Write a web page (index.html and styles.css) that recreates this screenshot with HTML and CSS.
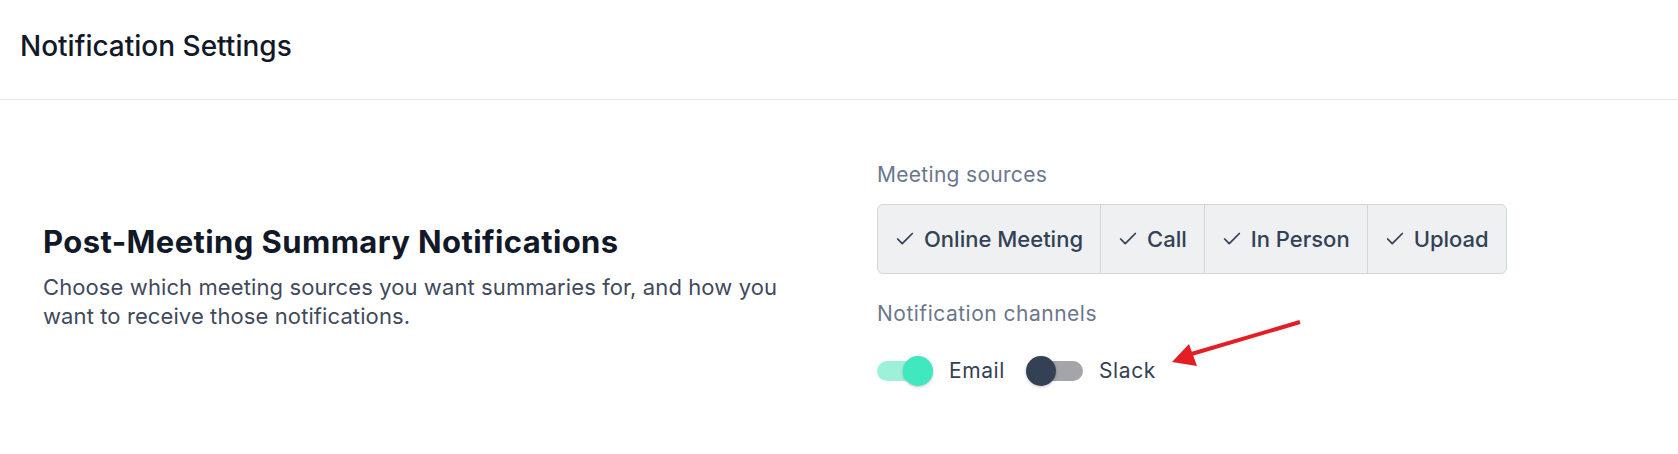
FILE: index.html
```html
<!DOCTYPE html>
<html lang="en">
<head>
<meta charset="utf-8">
<title>Notification Settings</title>
<link rel="stylesheet" href="styles.css">
</head>
<body>
<header class="topbar">
  <h1 class="page-title">Notification Settings</h1>
</header>
<main class="settings">
  <section class="setting-row">
    <div class="setting-info">
      <h2 class="setting-title">Post-Meeting Summary Notifications</h2>
      <p class="setting-desc">Choose which meeting sources you want summaries for, and how you want to receive those notifications.</p>
    </div>
    <div class="setting-controls">
      <div class="field-label">Meeting sources</div>
      <div class="segmented">
        <button class="segment"><svg class="check" viewBox="0 0 24 24"><path d="M20 6 9 17l-5-5"/></svg>Online Meeting</button>
        <button class="segment"><svg class="check" viewBox="0 0 24 24"><path d="M20 6 9 17l-5-5"/></svg>Call</button>
        <button class="segment"><svg class="check" viewBox="0 0 24 24"><path d="M20 6 9 17l-5-5"/></svg>In Person</button>
        <button class="segment"><svg class="check" viewBox="0 0 24 24"><path d="M20 6 9 17l-5-5"/></svg>Upload</button>
      </div>
      <div class="field-label field-label-channels">Notification channels</div>
      <div class="channels">
        <label class="channel">
          <span class="toggle toggle-on"><span class="track"></span><span class="knob"></span></span>
          <span class="channel-name">Email</span>
        </label>
        <label class="channel">
          <span class="toggle toggle-off"><span class="track"></span><span class="knob"></span></span>
          <span class="channel-name">Slack</span>
        </label>
      </div>
    </div>
  </section>
</main>
<svg class="annotation-arrow" viewBox="0 0 1678 454" aria-hidden="true">
  <line x1="1300" y1="322" x2="1188" y2="355" stroke="#e31e24" stroke-width="4" stroke-linecap="butt"/>
  <polygon points="1172,362 1189,344 1197,366" fill="#e31e24"/>
</svg>
</body>
</html>
```
FILE: styles.css
```css
* { box-sizing: border-box; }

html, body {
  margin: 0;
  padding: 0;
  background: #ffffff;
}

body {
  font-family: Inter, "Open Sans", "Noto Sans", sans-serif;
  color: #111827;
  width: 1678px;
  height: 454px;
  overflow: hidden;
  position: relative;
}

.topbar {
  height: 100px;
  border-bottom: 1px solid #e5e7eb;
  display: flex;
  align-items: center;
  padding: 0 20px 8px;
}

.page-title {
  margin: 0;
  font-size: 28px;
  font-weight: 500;
  line-height: 34px;
  color: #111827;
}

.setting-row {
  display: grid;
  grid-template-columns: 758px 1fr;
  column-gap: 76px;
  padding: 62px 43px 0;
  align-items: center;
}

.setting-info {
  padding-top: 5px;
}

.setting-title {
  margin: 0 0 12px;
  font-size: 31px;
  line-height: 38px;
  font-weight: 700;
  letter-spacing: 0.4px;
  color: #111827;
}

.setting-desc {
  margin: 0;
  font-size: 22px;
  line-height: 29px;
  letter-spacing: 0.1px;
  color: #3f4a5c;
}

.setting-controls {
  display: flex;
  flex-direction: column;
  align-items: flex-start;
}

.field-label {
  font-size: 21px;
  line-height: 26px;
  letter-spacing: 0.3px;
  color: #6b778c;
  margin-bottom: 16px;
}

.field-label-channels {
  margin-top: 27px;
  margin-bottom: 29px;
  letter-spacing: 0.5px;
}

.segmented {
  display: flex;
  border: 1px solid #d3d6da;
  border-radius: 6px;
  background: #eef0f2;
  overflow: hidden;
}

.segment {
  display: flex;
  align-items: center;
  gap: 8px;
  height: 68px;
  padding: 0 17px 0 16px;
  border: 0;
  border-right: 1px solid #d3d6da;
  background: transparent;
  font-family: inherit;
  font-size: 22px;
  font-weight: 500;
  color: #334155;
}

.segment:last-child {
  border-right: 0;
}

.check {
  width: 22px;
  height: 22px;
  fill: none;
  stroke: #334155;
  stroke-width: 1.9;
  stroke-linecap: round;
  stroke-linejoin: round;
}

.channels {
  display: flex;
  align-items: center;
  gap: 22px;
}

.channel {
  display: flex;
  align-items: center;
  gap: 16px;
}

.toggle {
  position: relative;
  width: 56px;
  height: 30px;
  display: block;
}

.track {
  position: absolute;
  left: 0;
  right: 0;
  top: 5px;
  height: 20px;
  border-radius: 10px;
}

.knob {
  position: absolute;
  top: 0;
  width: 30px;
  height: 30px;
  border-radius: 50%;
  box-shadow: 0 1px 3px rgba(0, 0, 0, 0.25);
}

.toggle-on .track { background: #9ef1d9; }
.toggle-on .knob { background: #40e8bf; right: 0; }

.toggle-off .track { background: #a3a5aa; }
.toggle-off .knob { background: #344155; left: -1px; }

.channel-name {
  font-size: 21px;
  line-height: 26px;
  letter-spacing: 0.6px;
  color: #334155;
}

.annotation-arrow {
  position: absolute;
  left: 0;
  top: 0;
  width: 1678px;
  height: 454px;
  pointer-events: none;
}
```
